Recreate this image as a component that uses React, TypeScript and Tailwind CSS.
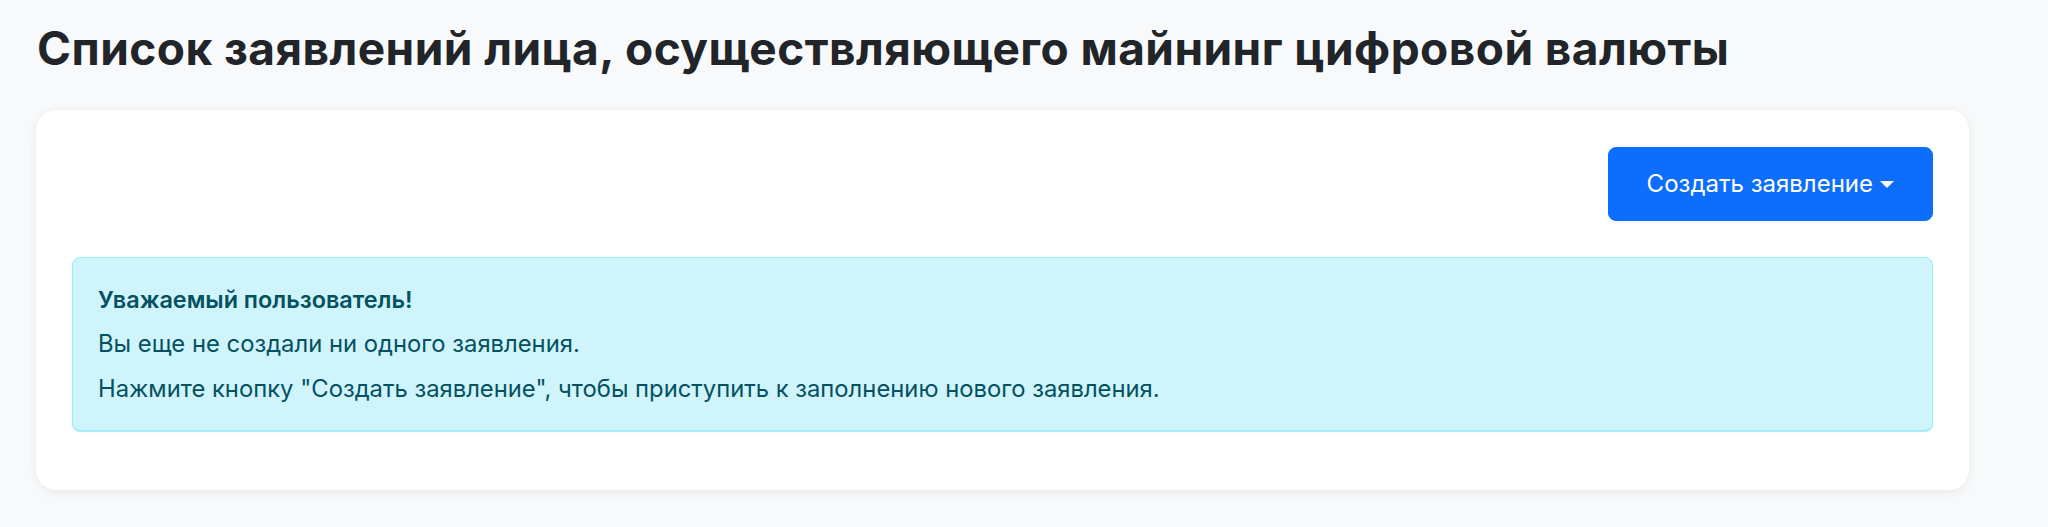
export default function App() {
    return (
        <div className="min-h-[527px] bg-[#f8f9fa] pl-[36px] pr-[79px] pt-[21px] font-['Inter','Noto_Sans',sans-serif] text-[#212529]">
            {/* Page title */}
            <h1 className="mb-[34px] pl-[1px] text-[46px] font-bold leading-[1.2] tracking-[0.45px]">
                Список заявлений лица, осуществляющего майнинг цифровой валюты
            </h1>

            {/* Card */}
            <div className="rounded-[20px] bg-white px-[36px] pt-[37px] pb-[59px] shadow-[0_2px_10px_rgba(0,0,0,0.07)]">
                <div className="flex justify-end">
                    <button className="flex h-[74px] items-center rounded-[8px] border border-[#0d6efd] bg-[#0d6efd] px-[38px] text-[24px] text-white">
                        Создать заявление
                        <span className="ml-[7px] inline-block h-0 w-0 border-x-[7.5px] border-t-[7.5px] border-x-transparent border-t-white" />
                    </button>
                </div>

                {/* Info alert */}
                <div className="mt-[36px] rounded-[8px] border border-[#9eeaf9] bg-[#cff4fc] px-[25px] py-[26px] text-[23.8px] leading-[31.2px] text-[#055160] shadow-[0_1px_1px_rgba(110,220,240,0.6)]">
                    <p className="mb-[13px] text-[23.4px] font-semibold">Уважаемый пользователь!</p>
                    <p className="mb-[13px]">Вы еще не создали ни одного заявления.</p>
                    <p>Нажмите кнопку "Создать заявление", чтобы приступить к заполнению нового заявления.</p>
                </div>
            </div>
        </div>
    );
}
